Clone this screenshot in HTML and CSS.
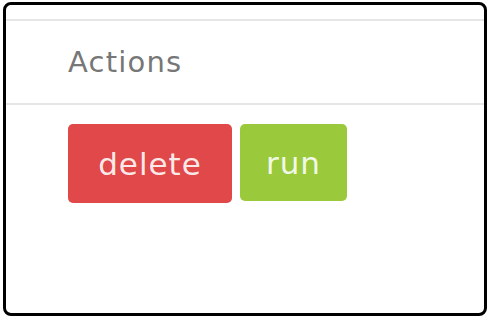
FILE: index.html
```html
<!DOCTYPE html>
<html lang="en">
<head>
    <meta charset="UTF-8">
    <title>Jobs</title>
    <link rel="stylesheet" href="styles.css">
</head>
<body>
    <div class="frame">
        <table class="jobs-table">
            <thead>
                <tr>
                    <th>Actions</th>
                </tr>
            </thead>
            <tbody>
                <tr>
                    <td>
                        <div class="action-buttons">
                            <button class="btn btn-delete">delete</button>
                            <button class="btn btn-run">run</button>
                        </div>
                    </td>
                </tr>
            </tbody>
        </table>
    </div>
</body>
</html>
```

FILE: styles.css
```css
body {
    margin: 0;
    background: white;
    font-family: "DejaVu Sans", sans-serif;
}
.frame {
    box-sizing: border-box;
    margin: 2px 3px;
    width: 484px;
    height: 314px;
    border: 3px solid #000;
    border-radius: 8px;
    overflow: hidden;
    padding-top: 14px;
}
.jobs-table {
    width: 100%;
    border-collapse: collapse;
}
.jobs-table th {
    border-top: 2px solid #e6e6e6;
    border-bottom: 2px solid #e6e6e6;
    height: 82px;
    padding: 0 0 0 62px;
    text-align: left;
    font-weight: normal;
    font-size: 29px;
    letter-spacing: 1.2px;
    color: #777;
}
.jobs-table td {
    padding: 19px 0 0 62px;
}
.action-buttons {
    display: flex;
    align-items: flex-start;
    gap: 8px;
}
.btn {
    height: 79px;
    border: none;
    border-radius: 5px;
    color: rgba(255, 255, 255, 0.9);
    font-family: "DejaVu Sans", sans-serif;
    font-size: 31px;
    letter-spacing: 1px;
    padding: 0;
}
.btn-delete {
    width: 164px;
    background-color: #e0484a;
}
.btn-run {
    width: 107px;
    height: 77px;
    background-color: #9aca3c;
}
```
